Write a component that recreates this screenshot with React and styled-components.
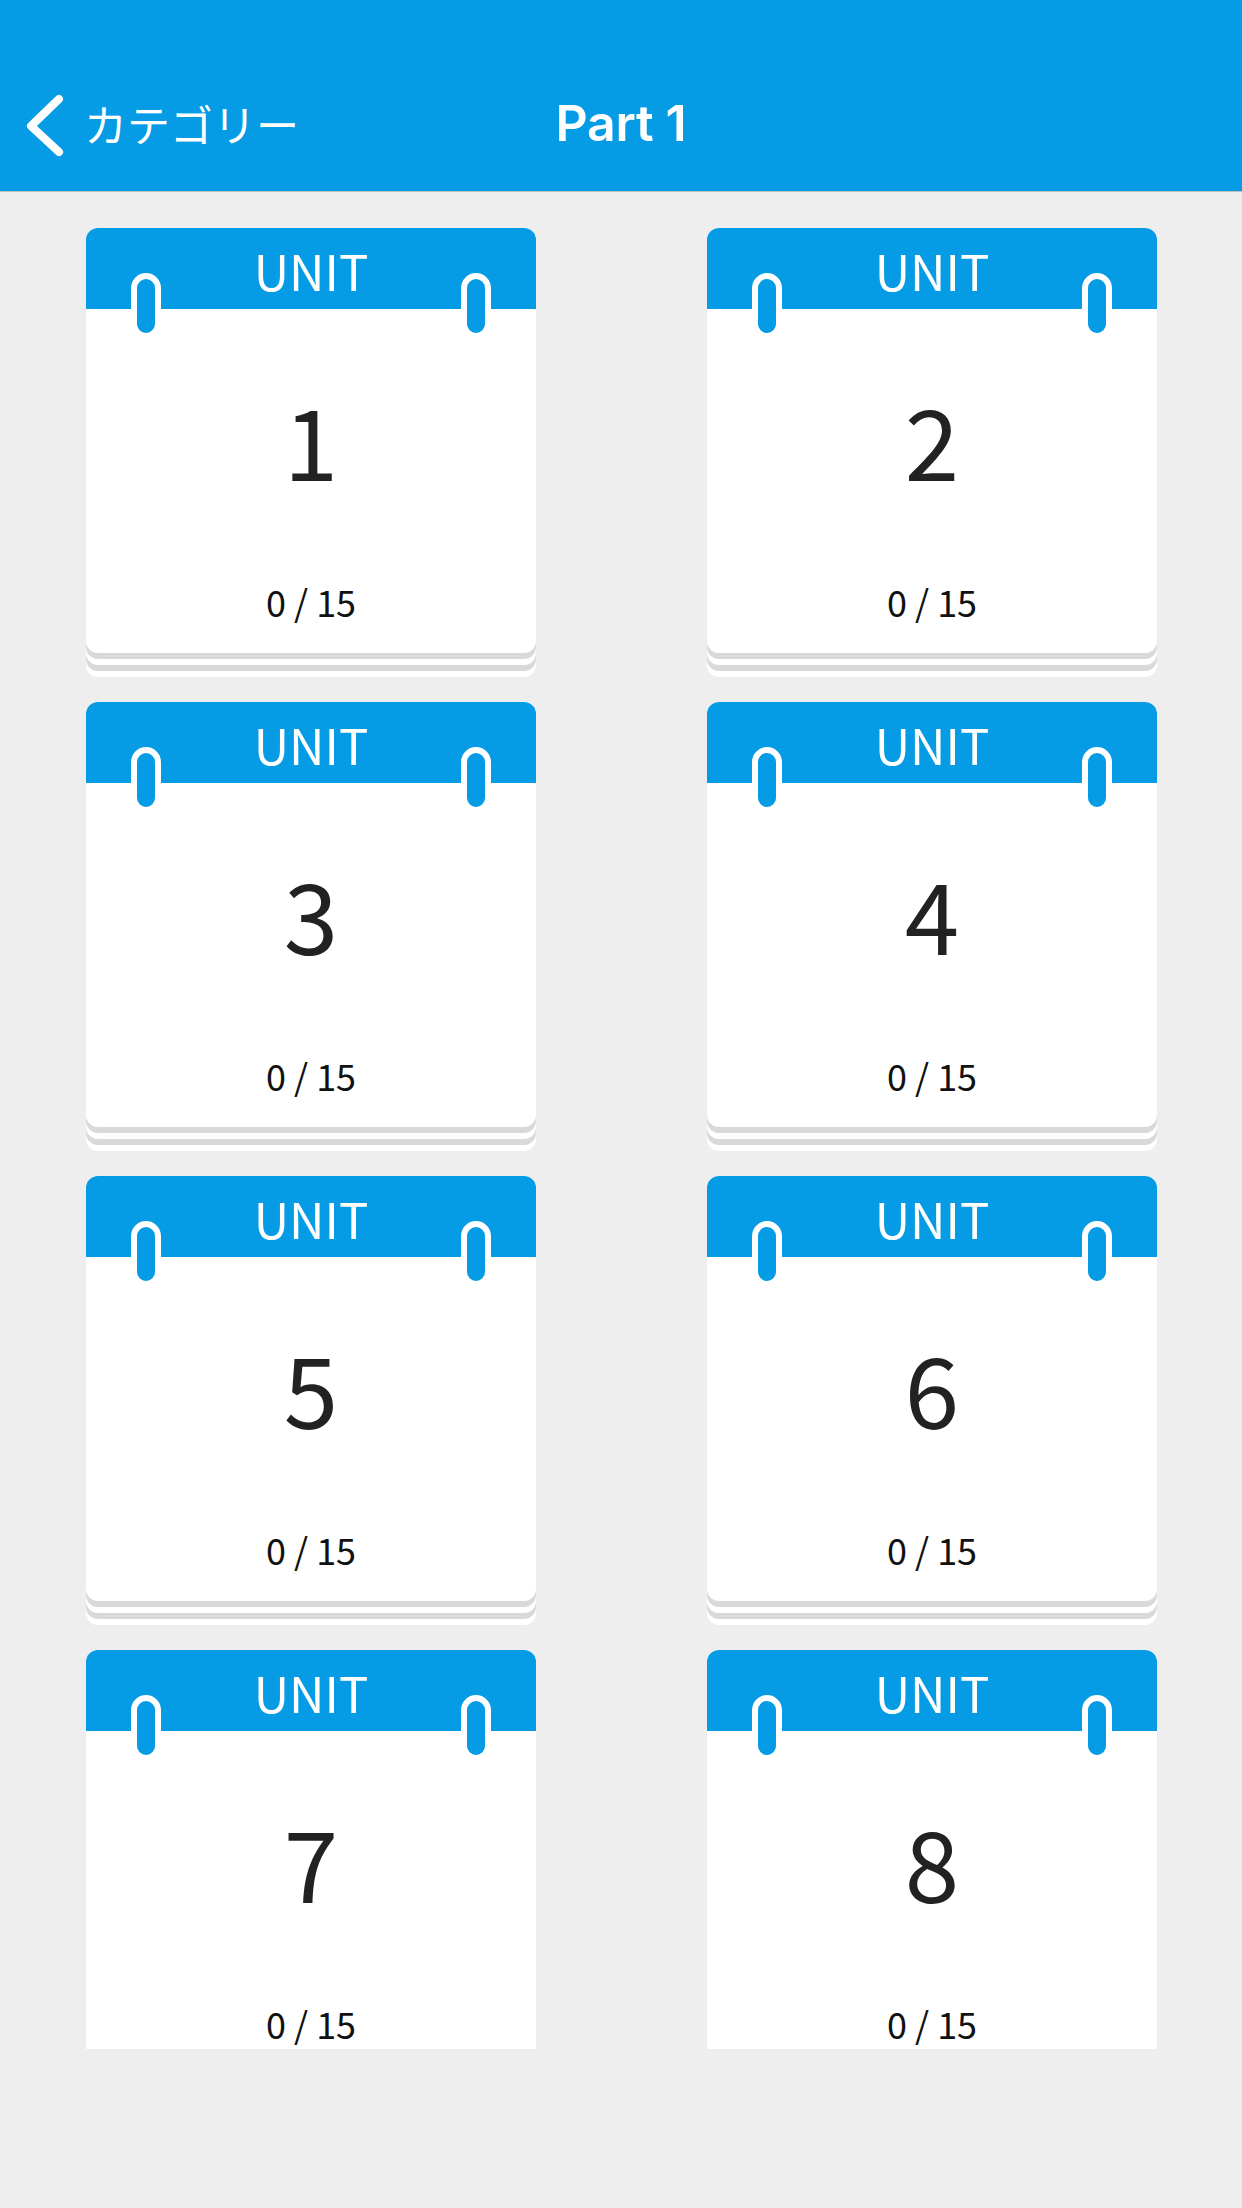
import styled, { createGlobalStyle } from "styled-components";

const GlobalStyle = createGlobalStyle`
  html, body {
    margin: 0;
    padding: 0;
    background: #eeeeee;
  }
  body {
    font-family: "Noto Sans CJK JP", "Noto Sans", sans-serif;
  }
`;

const BLUE = "#059be5";

const Page = styled.div`
  width: 1242px;
  height: 2208px;
  background: #eeeeee;
  display: flex;
  flex-direction: column;
  overflow: hidden;
`;

const Header = styled.header`
  height: 191px;
  background: ${BLUE};
  border-bottom: 1px solid #bdbdbd;
  display: flex;
  flex-direction: column;
  flex-shrink: 0;
`;

const StatusBar = styled.div`
  height: 60px;
`;

const NavBar = styled.nav`
  flex: 1;
  display: grid;
  grid-template-columns: 1fr auto 1fr;
  align-items: center;
  padding-bottom: 6px;
`;

const BackButton = styled.button`
  display: flex;
  align-items: center;
  gap: 20px;
  padding: 0 0 0 26px;
  border: none;
  background: none;
  color: #fff;
  font-family: "Noto Sans CJK JP", sans-serif;
  font-size: 43px;
  font-weight: 400;
  cursor: pointer;
  justify-self: start;

  svg {
    margin-top: 6px;
  }
`;

const Title = styled.h1`
  margin: 0;
  color: #fff;
  font-family: Inter, "Liberation Sans", sans-serif;
  font-size: 50px;
  font-weight: 600;
  letter-spacing: -0.3px;
`;

const Scroll = styled.main`
  height: 1857px;
  overflow: hidden;
  flex-shrink: 0;
`;

const Grid = styled.div`
  display: grid;
  grid-template-columns: 450px 450px;
  column-gap: 171px;
  row-gap: 49px;
  padding: 36px 0 0 86px;
`;

const Card = styled.div`
  position: relative;
  height: 425px;
  background: #fff;
  border-radius: 12px;
  display: flex;
  flex-direction: column;
  box-shadow: 0 6px 0 #d9d9d9, 0 12px 0 #fff, 0 18px 0 #d9d9d9,
    0 24px 0 #fff;
`;

const CardHead = styled.div`
  height: 81px;
  background: ${BLUE};
  border-radius: 12px 12px 0 0;
  display: flex;
  justify-content: center;
  align-items: center;
  color: #fff;
  font-size: 49px;
  font-weight: 400;
  line-height: 1;
  padding-top: 2px;
  box-sizing: border-box;
`;

const Ring = styled.span`
  position: absolute;
  top: 45px;
  ${(p) => (p.$side === "left" ? "left: 45px;" : "right: 45px;")}
  width: 18px;
  height: 54px;
  background: ${BLUE};
  border: 6px solid #fff;
  border-radius: 15px;
`;

const Number = styled.div`
  margin-top: 79px;
  text-align: center;
  color: #222;
  font-size: 98px;
  line-height: 100px;
  font-weight: 400;
`;

const Count = styled.div`
  margin-top: 95px;
  text-align: center;
  color: #111;
  font-size: 36px;
  line-height: 36px;
`;

const BottomSpace = styled.div`
  flex: 1;
`;

function ChevronLeft() {
  return (
    <svg width="38" height="64" viewBox="0 0 38 64" fill="none">
      <path
        d="M33 5 L5 32 L33 58"
        stroke="#fff"
        strokeWidth="8"
        strokeLinecap="round"
        strokeLinejoin="round"
      />
    </svg>
  );
}

const units = [1, 2, 3, 4, 5, 6, 7, 8];

function UnitCard({ number, done, total }) {
  return (
    <Card>
      <CardHead>UNIT</CardHead>
      <Ring $side="left" />
      <Ring $side="right" />
      <Number>{number}</Number>
      <Count>{`${done} / ${total}`}</Count>
    </Card>
  );
}

export default function App() {
  return (
    <>
      <GlobalStyle />
      <Page>
        <Header>
          <StatusBar />
          <NavBar>
            <BackButton>
              <ChevronLeft />
              <span>カテゴリー</span>
            </BackButton>
            <Title>Part 1</Title>
            <div />
          </NavBar>
        </Header>
        <Scroll>
          <Grid>
            {units.map((n) => (
              <UnitCard key={n} number={n} done={0} total={15} />
            ))}
          </Grid>
        </Scroll>
        <BottomSpace />
      </Page>
    </>
  );
}
